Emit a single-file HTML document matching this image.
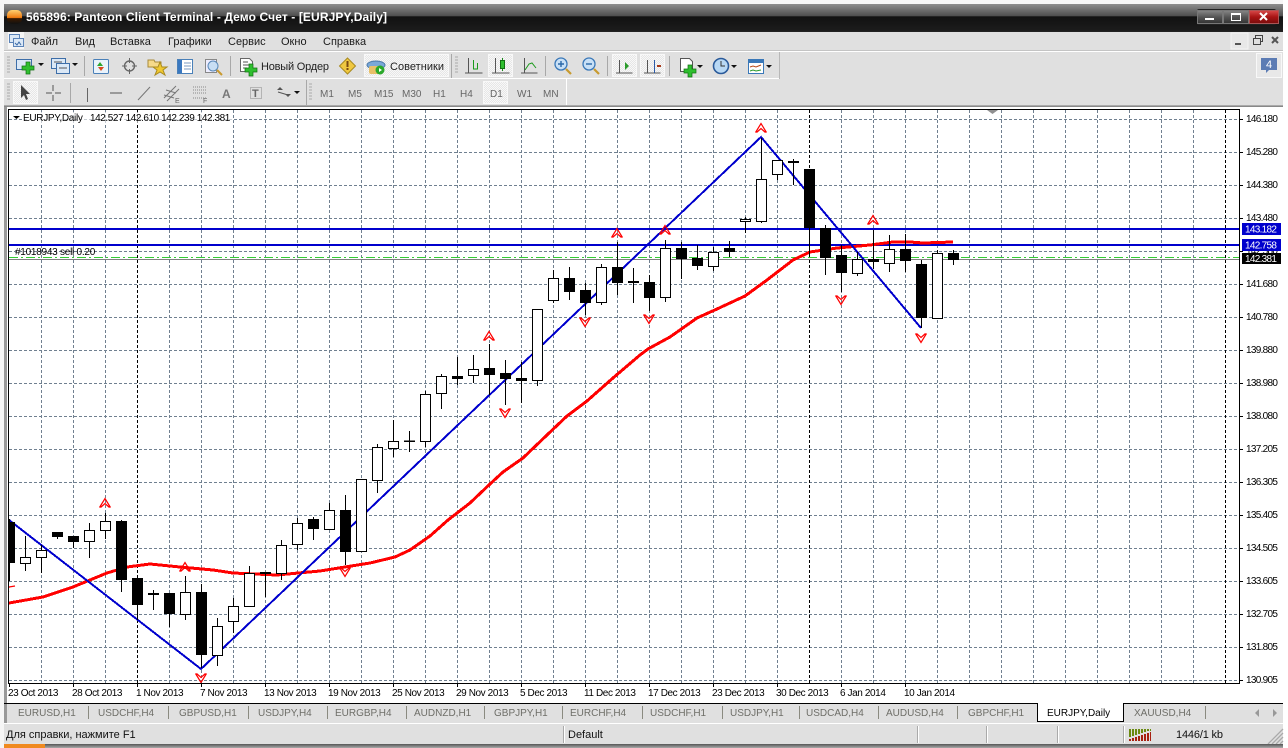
<!DOCTYPE html>
<html lang="ru"><head><meta charset="utf-8"><title>565896: Panteon Client Terminal</title>
<style>
html,body{margin:0;padding:0;background:#fff;width:1288px;height:748px;overflow:hidden}
svg{display:block;position:absolute;left:0;top:0;font-family:"Liberation Sans","Noto Sans CJK SC",sans-serif}
.m{font-size:11px;fill:#1a1a1a}
.t{font-size:11px;fill:#222}
.g{font-size:10px;fill:#666}
.ax{font-size:10px;fill:#000;letter-spacing:-.7px}
.d{font-size:10px;fill:#000;letter-spacing:-.4px}
.tab{font-size:10px;fill:#6e6e68}
.sep{stroke:#a8a8a8;stroke-width:1}
.w{fill:#fff;stroke:#000;stroke-width:1}
.b{fill:#000;stroke:#000;stroke-width:1}
.pr{fill:url(#dots);stroke:#f8f8f8;stroke-width:1}
.pl{fill:#2fbf2f;stroke:#127012;stroke-width:.7}
.ic{fill:none;stroke:#555;stroke-width:1}
</style></head>
<body>
<svg width="1288" height="748" viewBox="0 0 1288 748" xmlns="http://www.w3.org/2000/svg">
<defs>
<pattern id="dots" width="2" height="2" patternUnits="userSpaceOnUse"><rect width="2" height="2" fill="#e6e6e6"/><rect width="1" height="1" fill="#f8f8f8"/><rect x="1" y="1" width="1" height="1" fill="#f8f8f8"/></pattern>
<linearGradient id="tg" x1="0" y1="0" x2="0" y2="1"><stop offset="0" stop-color="#8e8e8e"/><stop offset=".45" stop-color="#4d4d4d"/><stop offset=".46" stop-color="#111"/><stop offset="1" stop-color="#1c1c1c"/></linearGradient>
<linearGradient id="btn" x1="0" y1="0" x2="0" y2="1"><stop offset="0" stop-color="#888"/><stop offset=".5" stop-color="#555"/><stop offset="1" stop-color="#333"/></linearGradient>
<linearGradient id="cl" x1="0" y1="0" x2="0" y2="1"><stop offset="0" stop-color="#d84a4a"/><stop offset=".5" stop-color="#a81414"/><stop offset="1" stop-color="#7a0c0c"/></linearGradient>
<linearGradient id="or" x1="0" y1="0" x2="0" y2="1"><stop offset="0" stop-color="#ffd070"/><stop offset=".55" stop-color="#f07a10"/><stop offset=".6" stop-color="#3a1a00"/><stop offset="1" stop-color="#111"/></linearGradient>
<linearGradient id="bot" x1="0" y1="0" x2="0" y2="1"><stop offset="0" stop-color="#555"/><stop offset="1" stop-color="#aaa"/></linearGradient>
<clipPath id="cc"><rect x="9" y="110" width="1230" height="573"/></clipPath>
</defs>
<rect width="1288" height="748" fill="#f6f6f6"/>
<rect x="1283" width="5" height="748" fill="#fff"/>
<!-- title bar -->
<rect x="4" y="4" width="1279" height="27" fill="url(#tg)"/>
<rect x="7" y="10" width="15" height="14" rx="5" fill="url(#or)"/>
<text x="26" y="21" font-size="12" font-weight="700" fill="#fff" textLength="361" lengthAdjust="spacing">565896: Panteon Client Terminal - Демо Счет - [EURJPY,Daily]</text>
<rect x="1197" y="9" width="79" height="16" rx="2" fill="#222"/>
<rect x="1197.5" y="10.5" width="25" height="13" fill="url(#btn)" stroke="#777"/>
<rect x="1223.5" y="10.5" width="25" height="13" fill="url(#btn)" stroke="#777"/>
<rect x="1249.5" y="10.5" width="29" height="13" fill="url(#cl)" stroke="#a55"/>
<rect x="1205" y="18" width="9" height="2" fill="#fff"/>
<rect x="1231.5" y="13.5" width="9" height="7" fill="none" stroke="#fff"/><rect x="1231" y="13" width="10" height="2" fill="#fff"/>
<path d="M1260 13l7 7M1267 13l-7 7" stroke="#fff" stroke-width="2"/>
<!-- menu + toolbars background -->
<rect x="4" y="31" width="1279" height="75" fill="#e0e0e0"/>
<rect x="4" y="31" width="1279" height="1" fill="#222"/>
<rect x="4" y="50" width="1279" height="1" fill="#c4c4c4"/><rect x="4" y="51" width="1279" height="1" fill="#fff"/>
<rect x="4" y="78" width="776" height="1" fill="#fff"/>
<rect x="779" y="52" width="1" height="27" fill="#b8b8b8"/>
<rect x="566" y="79" width="1" height="26" fill="#fff"/>
<rect x="4" y="105" width="1279" height="1" fill="#aaa"/>
<rect x="4" y="106" width="1279" height="1" fill="#888"/>
<!-- menu -->
<rect x="8" y="32" width="16" height="17" fill="#f6f6f6"/>
<rect x="9.5" y="34.5" width="10" height="8" fill="#dbe8f6" stroke="#5b83b8"/><rect x="13.5" y="38.5" width="10" height="8" fill="#dbe8f6" stroke="#5b83b8"/>
<path d="M15 43l2 2 2-3 2 3" fill="none" stroke="#3a6aa8"/>
<text x="31" y="45" class="m">Файл</text><text x="75" y="45" class="m">Вид</text><text x="110" y="45" class="m">Вставка</text><text x="168" y="45" class="m">Графики</text><text x="228" y="45" class="m">Сервис</text><text x="281" y="45" class="m">Окно</text><text x="323" y="45" class="m">Справка</text>
<rect x="1231" y="33" width="17" height="16" fill="#e8e8e8" stroke="#f4f4f4"/><rect x="1235" y="43" width="6" height="2" fill="#555"/>
<rect x="1253.5" y="38.5" width="7" height="6" fill="none" stroke="#444"/><path d="M1255.5 38v-2.500h7v6h-2" fill="none" stroke="#444"/>
<path d="M1272 37l6 6M1278 37l-6 6" stroke="#555" stroke-width="2"/>
<!-- toolbar 1 -->
<path d="M7 57h3M7 60h3M7 63h3M7 66h3M7 69h3M7 72h3" stroke="#aaa"/>
<path d="M7 84h3M7 87h3M7 90h3M7 93h3M7 96h3M7 99h3" stroke="#aaa"/>
<path d="M84.500 56v20M230.500 56v20M451.500 54v24M545.500 56v20M607.500 56v20M669.500 56v20M70.500 83v20M306.500 80v25" class="sep"/>
<path d="M455 57h3M455 60h3M455 63h3M455 66h3M455 69h3M455 72h3M309 84h3M309 87h3M309 90h3M309 93h3M309 96h3M309 99h3" stroke="#aaa"/>
<!-- new chart -->
<rect x="16.500" y="59.500" width="15" height="10" fill="#dbe8f6" stroke="#3e6ea8"/>
<path d="M26 62h4v4h4v4h-4v4h-4v-4h-4v-4h4z" class="pl"/>
<path d="M38 63h6l-3 3z" fill="#111"/>
<!-- profiles -->
<rect x="51.500" y="58.500" width="14" height="10" fill="#dbe8f6" stroke="#3e6ea8"/><rect x="56.500" y="63.500" width="13" height="10" fill="#dbe8f6" stroke="#3e6ea8"/>
<path d="M54 62h8M59 68h8" stroke="#555"/>
<path d="M72 63h6l-3 3z" fill="#111"/>
<!-- market watch -->
<rect x="93.500" y="59.500" width="15" height="14" rx="1" fill="#eaf3fb" stroke="#4a80b8"/>
<path d="M100 62l-3 4h6z" fill="#2fa52f"/><path d="M101 71l-3-4h6z" fill="#d84a20"/>
<!-- crosshair -->
<circle cx="129.500" cy="66" r="5" fill="none" stroke="#666" stroke-width="1.400"/><path d="M129.500 58v5M129.500 69v5M122 66h5M132 66h5" stroke="#666"/>
<!-- folder star -->
<path d="M148 60h6l1 2h6v5h-13z" fill="#f6da8a" stroke="#a88a3a"/><path d="M160 62l2 5h5l-4 3 2 5-5-3-5 3 2-5-4-3h5z" fill="#f0c830" stroke="#a88a20"/>
<!-- navigator -->
<rect x="177.500" y="59.500" width="15" height="14" fill="#fff" stroke="#4a80b8"/><rect x="178" y="60" width="4" height="13" fill="#3a78c0"/><path d="M184 63h7M184 66h7M184 69h7" stroke="#7a98c0"/>
<!-- terminal zoom -->
<rect x="205.500" y="59.500" width="11" height="13" fill="#eef" stroke="#888"/><circle cx="213" cy="66" r="5" fill="#c8def4" stroke="#5a88b8"/><path d="M217 70l5 5" stroke="#c89a30" stroke-width="2"/>
<!-- new order -->
<path d="M240.500 58.500h9l3 3v10h-12z" fill="#fff" stroke="#666"/><path d="M243 62h5M243 65h6M243 68h4" stroke="#555"/>
<path d="M249 64h4v4h4v4h-4v4h-4v-4h-4v-4h4z" class="pl"/>
<text x="261" y="70" class="t" textLength="68" lengthAdjust="spacing">Новый Ордер</text>
<!-- warn -->
<path d="M347.500 58l8 8-8 8-8-8z" fill="#f0c840" stroke="#a88a20"/><rect x="346.500" y="61" width="2" height="6" fill="#7a4a10"/><rect x="346.500" y="68" width="2" height="2" fill="#7a4a10"/>
<!-- experts -->
<rect x="364.500" y="54.500" width="84" height="22" class="pr"/>
<ellipse cx="376" cy="65" rx="9" ry="4" fill="#7aa8d8" stroke="#4a78a8"/><rect x="369" y="66" width="13" height="8" rx="2" fill="#e8c068"/><circle cx="380" cy="70" r="4.500" fill="#2aa82a"/><path d="M379 68l3 2-3 2z" fill="#fff"/>
<text x="390" y="70" class="t" textLength="54" lengthAdjust="spacing">Советники</text>
<!-- bar chart -->
<path d="M468.500 58v15h14M465 73h3" fill="none" stroke="#555"/><path d="M473.500 60v9h4v-6" fill="none" stroke="#1a9a1a"/>
<rect x="488.500" y="54.500" width="24" height="22" class="pr"/>
<path d="M495.500 58v15h14M492 73h3" fill="none" stroke="#555"/><path d="M502.500 58v13" stroke="#1a8a1a"/><rect x="500.500" y="60.500" width="4" height="8" fill="#2fbf2f" stroke="#127012"/>
<path d="M524.500 58v15h13M521 73h3" fill="none" stroke="#555"/><path d="M525 70l4-6 3-1 4 5" fill="none" stroke="#1a9a1a"/>
<!-- zooms -->
<circle cx="561" cy="64" r="6" fill="#c8e0f6" stroke="#3a78b8" stroke-width="1.300"/><path d="M558 64h6M561 61v6" stroke="#2a68a8" stroke-width="1.400"/><path d="M566 69l5 5" stroke="#c89a30" stroke-width="2.200"/>
<circle cx="589" cy="64" r="6" fill="#c8e0f6" stroke="#3a78b8" stroke-width="1.300"/><path d="M586 64h6" stroke="#2a68a8" stroke-width="1.400"/><path d="M594 69l5 5" stroke="#c89a30" stroke-width="2.200"/>
<rect x="612.500" y="54.500" width="24" height="22" class="pr"/><path d="M619.500 60v13h13M616 73h3" fill="none" stroke="#555"/><path d="M625 62l4 4-4 4z" fill="#2a9a2a"/>
<rect x="640.500" y="54.500" width="24" height="22" class="pr"/><path d="M647.500 60v13h13M644 73h3" fill="none" stroke="#555"/><path d="M654.500 60v13" stroke="#2a5aa8"/><path d="M657 66h4" stroke="#a83a1a" stroke-width="2"/>
<path d="M680.500 58.500h9l3 3v10h-12z" fill="#fff" stroke="#555"/><path d="M688 65h4v4h4v4h-4v4h-4v-4h-4v-4h4z" class="pl"/>
<path d="M697 65h6l-3 3z" fill="#111"/>
<circle cx="721" cy="66" r="7.500" fill="#b8d8f4" stroke="#2a5a9a" stroke-width="1.600"/><path d="M721 61v5h4" fill="none" stroke="#333"/>
<path d="M731 65h6l-3 3z" fill="#111"/>
<rect x="748.500" y="59.500" width="15" height="14" fill="#fff" stroke="#3a78b8"/><rect x="749" y="60" width="14" height="3" fill="#3a78b8"/><path d="M750 67l3-1 3 1 5-2" fill="none" stroke="#b84a1a"/><path d="M750 71l3-1 3 1 5-1" fill="none" stroke="#2a9a2a"/>
<path d="M766 65h6l-3 3z" fill="#111"/>
<!-- notification -->
<rect x="1256.500" y="53.500" width="25" height="24" fill="#e8e8e8" stroke="#f8f8f8"/>
<path d="M1261 58h16v12h-8l-3 3v-3h-5z" fill="#5c7cb4"/>
<text x="1269" y="68" font-size="11" fill="#fff" text-anchor="middle">4</text>
<!-- toolbar 2 -->
<rect x="13.500" y="81.500" width="24" height="22" class="pr"/>
<path d="M21 85v13l3-3 2 5 2-1-2-5h4z" fill="#444"/>
<path d="M53 85v6M53 95v6M46 93h6M55 93h6" stroke="#555"/>
<path d="M87.500 88v14" stroke="#666"/>
<path d="M110 93h12" stroke="#555"/>
<path d="M138 100l12-13" stroke="#777"/>
<path d="M164 98l12-12M167 101l12-12M166 90l10 3M164 95l10 3" stroke="#777"/><text x="175" y="103" font-size="7" fill="#666">E</text>
<path d="M193 87h13M193 90h13M193 93h13M193 98h13" stroke="#888" stroke-dasharray="1 1"/><text x="203" y="103" font-size="7" fill="#666">F</text>
<text x="222" y="98" font-size="12" font-weight="700" fill="#777">A</text>
<rect x="250.500" y="87.500" width="11" height="11" fill="none" stroke="#888" stroke-dasharray="1 1"/><text x="252" y="97" font-size="11" font-weight="700" fill="#666">T</text>
<path d="M280 87l3 3h-6zM288 97l3-3h-6z" fill="#555"/><path d="M278 92l10 3" stroke="#555"/>
<path d="M294 91h6l-3 3z" fill="#111"/>
<text x="320" y="97" class="g">M1</text><text x="348" y="97" class="g">M5</text><text x="374" y="97" class="g">M15</text><text x="402" y="97" class="g">M30</text><text x="433" y="97" class="g">H1</text><text x="460" y="97" class="g">H4</text>
<rect x="483.500" y="81.500" width="24" height="22" class="pr"/>
<text x="490" y="97" class="g">D1</text><text x="517" y="97" class="g">W1</text><text x="543" y="97" class="g">MN</text>
<!-- chart -->
<rect x="4" y="107" width="3" height="596" fill="#999"/>
<rect x="7" y="107" width="1276" height="596" fill="#fff"/>
<g stroke="#708090" stroke-dasharray="3 2" shape-rendering="crispEdges" fill="none">
<path d="M41.500 110V683M73.500 110V683M105.500 110V683M169.500 110V683M201.500 110V683M233.500 110V683M265.500 110V683M297.500 110V683M329.500 110V683M361.500 110V683M393.500 110V683M425.500 110V683M457.500 110V683M489.500 110V683M521.500 110V683M553.500 110V683M585.500 110V683M617.500 110V683M649.500 110V683M681.500 110V683M713.500 110V683M745.500 110V683M777.500 110V683M841.500 110V683M873.500 110V683M905.500 110V683M937.500 110V683M969.500 110V683M1001.500 110V683M1033.500 110V683M1065.500 110V683M1097.500 110V683M1129.500 110V683M1161.500 110V683M1193.500 110V683"/>
<path d="M9 119.500H1239M9 152.500H1239M9 185.500H1239M9 218.500H1239M9 251.500H1239M9 284.500H1239M9 317.500H1239M9 350.500H1239M9 383.500H1239M9 416.500H1239M9 449.500H1239M9 482.500H1239M9 515.500H1239M9 548.500H1239M9 581.500H1239M9 614.500H1239M9 647.500H1239M9 680.500H1239"/>
</g>
<path d="M137.500 110V683M809.500 110V683M1225.500 110V683" stroke="#000" stroke-dasharray="3 2" shape-rendering="crispEdges"/>
<g clip-path="url(#cc)">
<path d="M9 259.500H1239" stroke="#808080" shape-rendering="crispEdges"/>
<path d="M9 257.500H1239" stroke="#32cd32" stroke-dasharray="9 3 2 3" shape-rendering="crispEdges"/>
<path d="M9 229H1239M9 245H1239" stroke="#0000cd" stroke-width="2" shape-rendering="crispEdges"/>
<polyline fill="none" stroke="#ff0000" stroke-width="3" shape-rendering="crispEdges" points="9,603 43,597 73,587 107,573 127,567 150,564 180,567 213,570 233,573 277,575 320,571 345,567 370,563 395,557 410,550 430,536 448,520 470,503 490,484 503,472 523,458 547,435 567,416 587,401 613,378 640,355 648,349 670,337 697,318 717,309 745,296 767,280 793,260 810,252 837,248 870,245 893,242 910,242 923,243 953,242"/>
<polyline fill="none" stroke="#0000cd" stroke-width="2" shape-rendering="crispEdges" points="9,520 201,669 761,137 921,328"/>
<!-- wicks -->
<path stroke="#000" fill="none" shape-rendering="crispEdges" d="M9.500 519V581M25.500 536V571M41.500 545V573M57.500 532V539M73.500 536V548M89.500 523V558M105.500 513V539M121.500 520V592M137.500 578V620M153.500 590V610M169.500 593V627M185.500 576V620M201.500 584V668M217.500 618V666M233.500 598V633M249.500 566V607M265.500 572V597M281.500 540V580M297.500 518V550M313.500 517V540M329.500 503V529M345.500 495V565M361.500 479V552M377.500 444V493M393.500 420V457M409.500 431V452M425.500 391V447M441.500 374V409M457.500 357V385M473.500 355V383M489.500 344V395M505.500 360V405M521.500 362V403M537.500 309V386M553.500 270V303M569.500 267V300M585.500 283V315M601.500 264V305M617.500 242V295M633.500 268V303M649.500 275V311M665.500 240V302M681.500 242V279M697.500 245V270M713.500 247V271M729.500 241V257M745.500 217V233M761.500 138V223M777.500 160V180M793.500 159V185M809.500 169V257M825.500 225V275M841.500 245V292M857.500 252V276M873.500 230V269M889.500 235V272M905.500 234V272M921.500 260V328M937.500 250V318M953.500 250V265"/>
<!-- bodies -->
<g shape-rendering="crispEdges">
<rect class="b" x="4.500" y="522.500" width="10" height="40"/>
<rect class="w" x="20.500" y="557.500" width="10" height="6"/>
<rect class="w" x="36.500" y="550.500" width="10" height="7"/>
<rect class="b" x="52.500" y="532.500" width="10" height="4"/>
<rect class="b" x="68.500" y="536.500" width="10" height="5"/>
<rect class="w" x="84.500" y="530.500" width="10" height="11"/>
<rect class="w" x="100.500" y="521.500" width="10" height="9"/>
<rect class="b" x="116.500" y="521.500" width="10" height="58"/>
<rect class="b" x="132.500" y="578.500" width="10" height="26"/>
<rect class="b" x="148.500" y="593.500" width="10" height="1"/>
<rect class="b" x="164.500" y="593.500" width="10" height="20"/>
<rect class="w" x="180.500" y="592.500" width="10" height="22"/>
<rect class="b" x="196.500" y="592.500" width="10" height="62"/>
<rect class="w" x="212.500" y="626.500" width="10" height="29"/>
<rect class="w" x="228.500" y="606.500" width="10" height="15"/>
<rect class="w" x="244.500" y="573.500" width="10" height="33"/>
<rect class="b" x="260.500" y="572.500" width="10" height="1"/>
<rect class="w" x="276.500" y="545.500" width="10" height="28"/>
<rect class="w" x="292.500" y="523.500" width="10" height="21"/>
<rect class="b" x="308.500" y="519.500" width="10" height="9"/>
<rect class="w" x="324.500" y="510.500" width="10" height="19"/>
<rect class="b" x="340.500" y="510.500" width="10" height="41"/>
<rect class="w" x="356.500" y="479.500" width="10" height="72"/>
<rect class="w" x="372.500" y="447.500" width="10" height="33"/>
<rect class="w" x="388.500" y="441.500" width="10" height="7"/>
<rect class="b" x="404.500" y="441" width="10" height="0.500"/>
<rect class="w" x="420.500" y="394.500" width="10" height="47"/>
<rect class="w" x="436.500" y="376.500" width="10" height="17"/>
<rect class="b" x="452.500" y="376.500" width="10" height="2"/>
<rect class="w" x="468.500" y="369.500" width="10" height="6"/>
<rect class="b" x="484.500" y="368.500" width="10" height="6"/>
<rect class="b" x="500.500" y="373.500" width="10" height="5"/>
<rect class="b" x="516.500" y="378.500" width="10" height="2"/>
<rect class="w" x="532.500" y="309.500" width="10" height="71"/>
<rect class="w" x="548.500" y="278.500" width="10" height="22"/>
<rect class="b" x="564.500" y="278.500" width="10" height="13"/>
<rect class="b" x="580.500" y="290.500" width="10" height="12"/>
<rect class="w" x="596.500" y="267.500" width="10" height="35"/>
<rect class="b" x="612.500" y="267.500" width="10" height="15"/>
<rect class="b" x="628.500" y="281.500" width="10" height="1"/>
<rect class="b" x="644.500" y="282.500" width="10" height="15"/>
<rect class="w" x="660.500" y="248.500" width="10" height="49"/>
<rect class="b" x="676.500" y="248.500" width="10" height="10"/>
<rect class="b" x="692.500" y="258.500" width="10" height="7"/>
<rect class="w" x="708.500" y="252.500" width="10" height="14"/>
<rect class="b" x="724.500" y="248.500" width="10" height="3"/>
<rect class="w" x="740.500" y="219.500" width="10" height="2"/>
<rect class="w" x="756.500" y="179.500" width="10" height="42"/>
<rect class="w" x="772.500" y="160.500" width="10" height="14"/>
<rect class="b" x="788.500" y="161.500" width="10" height="1"/>
<rect class="b" x="804.500" y="169.500" width="10" height="58"/>
<rect class="b" x="820.500" y="228.500" width="10" height="29"/>
<rect class="b" x="836.500" y="255.500" width="10" height="17"/>
<rect class="w" x="852.500" y="259.500" width="10" height="14"/>
<rect class="b" x="868.500" y="259.500" width="10" height="2"/>
<rect class="w" x="884.500" y="249.500" width="10" height="14"/>
<rect class="b" x="900.500" y="249.500" width="10" height="11"/>
<rect class="b" x="916.500" y="264.500" width="10" height="53"/>
<rect class="w" x="932.500" y="253.500" width="10" height="65"/>
<rect class="b" x="948.500" y="253.500" width="10" height="6"/>
</g>
<!-- fractals up -->
<g fill="none" stroke="#ff0000" stroke-width="1.200">
<path d="M99.500 507.500L105 498.500L110.500 507.500M100.500 507.500L105 503.500L109.500 507.500"/>
<path d="M179.500 571.500L185 562.500L190.500 571.500M180.500 571.500L185 567.500L189.500 571.500"/>
<path d="M483.500 340.500L489 331.500L494.500 340.500M484.500 340.500L489 336.500L493.500 340.500"/>
<path d="M611.500 237.500L617 228.500L622.500 237.500M612.500 237.500L617 233.500L621.500 237.500"/>
<path d="M659.500 234.500L665 225.500L670.500 234.500M660.500 234.500L665 230.500L669.500 234.500"/>
<path d="M755.500 132.500L761 123.500L766.500 132.500M756.500 132.500L761 128.500L765.500 132.500"/>
<path d="M867.500 224.500L873 215.500L878.500 224.500M868.500 224.500L873 220.500L877.500 224.500"/>
<!-- fractals down -->
<path d="M195.500 673.500L201 682.500L206.500 673.500M196.500 673.500L201 677.500L205.500 673.500"/>
<path d="M339.500 567.500L345 576.500L350.500 567.500M340.500 567.500L345 571.500L349.500 567.500"/>
<path d="M499.500 408.500L505 417.500L510.500 408.500M500.500 408.500L505 412.500L509.500 408.500"/>
<path d="M579.500 317.500L585 326.500L590.500 317.500M580.500 317.500L585 321.500L589.500 317.500"/>
<path d="M643.500 314.500L649 323.500L654.500 314.500M644.500 314.500L649 318.500L653.500 314.500"/>
<path d="M835.500 295.500L841 304.500L846.500 295.500M836.500 295.500L841 299.500L845.500 295.500"/>
<path d="M915.500 333.500L921 342.500L926.500 333.500M916.500 333.500L921 337.500L925.500 333.500"/>
<path d="M4 595L9 587L15 586M5 594L9 591"/>
</g>
</g>
<rect x="8.500" y="109.500" width="1231" height="574" fill="none" stroke="#000" shape-rendering="crispEdges"/>
<path d="M987 110h11l-5.500 4z" fill="#909090"/>
<path d="M13 116h7l-3.500 3z" fill="#000"/>
<rect x="22" y="112" width="210" height="12" fill="#fff" opacity=".6"/>
<text x="23" y="121" class="d" style="letter-spacing:-.3px">EURJPY,Daily</text>
<text x="90" y="121" class="d" style="letter-spacing:-.42px">142.527 142.610 142.239 142.381</text>
<text x="15" y="255" class="d" style="letter-spacing:-.25px">#1018943 sell 0.20</text>
<!-- axis ticks -->
<path d="M1240 119.500h3M1240 152.500h3M1240 185.500h3M1240 218.500h3M1240 251.500h3M1240 284.500h3M1240 317.500h3M1240 350.500h3M1240 383.500h3M1240 416.500h3M1240 449.500h3M1240 482.500h3M1240 515.500h3M1240 548.500h3M1240 581.500h3M1240 614.500h3M1240 647.500h3M1240 680.500h3" stroke="#000" shape-rendering="crispEdges"/>
<path d="M9.500 684v3M73.500 684v3M137.500 684v3M201.500 684v3M265.500 684v3M329.500 684v3M393.500 684v3M457.500 684v3M521.500 684v3M585.500 684v3M649.500 684v3M713.500 684v3M777.500 684v3M841.500 684v3M905.500 684v3" stroke="#000" shape-rendering="crispEdges"/>
<g class="ax">
<text x="1246" y="122">146.180</text><text x="1246" y="155">145.280</text><text x="1246" y="188">144.380</text><text x="1246" y="221">143.480</text><text x="1246" y="254">142.580</text><text x="1246" y="287">141.680</text><text x="1246" y="320">140.780</text><text x="1246" y="353">139.880</text><text x="1246" y="386">138.980</text><text x="1246" y="419">138.080</text><text x="1246" y="452">137.205</text><text x="1246" y="485">136.305</text><text x="1246" y="518">135.405</text><text x="1246" y="551">134.505</text><text x="1246" y="584">133.605</text><text x="1246" y="617">132.705</text><text x="1246" y="650">131.805</text><text x="1246" y="683">130.905</text>
</g>
<rect x="1242" y="223" width="39" height="12" fill="#0000cd"/><text x="1245" y="232.500" class="ax" style="fill:#fff">143.182</text>
<rect x="1242" y="239" width="39" height="12" fill="#0000cd"/><text x="1245" y="248.500" class="ax" style="fill:#fff">142.758</text>
<rect x="1242" y="253" width="39" height="11" fill="#000"/><text x="1245" y="262" class="ax" style="fill:#fff">142.381</text>
<g class="d">
<text x="8" y="696">23 Oct 2013</text><text x="72" y="696">28 Oct 2013</text><text x="136" y="696">1 Nov 2013</text><text x="200" y="696">7 Nov 2013</text><text x="264" y="696">13 Nov 2013</text><text x="328" y="696">19 Nov 2013</text><text x="392" y="696">25 Nov 2013</text><text x="456" y="696">29 Nov 2013</text><text x="520" y="696">5 Dec 2013</text><text x="584" y="696">11 Dec 2013</text><text x="648" y="696">17 Dec 2013</text><text x="712" y="696">23 Dec 2013</text><text x="776" y="696">30 Dec 2013</text><text x="840" y="696">6 Jan 2014</text><text x="904" y="696">10 Jan 2014</text>
</g>
<!-- tabs -->
<rect x="4" y="703" width="1279" height="20" fill="#e0e0e0"/>
<rect x="4" y="703" width="1279" height="1" fill="#000"/>
<rect x="4" y="704" width="3" height="19" fill="#999"/>
<path d="M88.500 706v13M168.500 706v13M248.500 706v13M327.500 706v13M406.500 706v13M484.500 706v13M562.500 706v13M642.500 706v13M722.500 706v13M799.500 706v13M878.500 706v13M957.500 706v13M1205.500 706v13" stroke="#8a8a80"/>
<text x="18" y="716" class="tab">EURUSD,H1</text><text x="98" y="716" class="tab">USDCHF,H4</text><text x="179" y="716" class="tab">GBPUSD,H1</text><text x="258" y="716" class="tab">USDJPY,H4</text><text x="335" y="716" class="tab">EURGBP,H4</text><text x="414" y="716" class="tab">AUDNZD,H1</text><text x="494" y="716" class="tab">GBPJPY,H1</text><text x="570" y="716" class="tab">EURCHF,H4</text><text x="650" y="716" class="tab">USDCHF,H1</text><text x="730" y="716" class="tab">USDJPY,H1</text><text x="806" y="716" class="tab">USDCAD,H4</text><text x="886" y="716" class="tab">AUDUSD,H4</text><text x="968" y="716" class="tab">GBPCHF,H1</text>
<rect x="1037.500" y="703.500" width="86" height="18" fill="#fff" stroke="#000"/><rect x="1038" y="703" width="85" height="1" fill="#fff"/>
<text x="1047" y="716" class="tab" style="fill:#000">EURJPY,Daily</text>
<text x="1134" y="716" class="tab">XAUUSD,H4</text>
<path d="M1259 709v8l-4-4z" fill="#999"/><path d="M1273 709v8l4-4z" fill="#999"/>
<!-- status -->
<rect x="4" y="723" width="1279" height="21" fill="#e0e0e0"/>
<rect x="4" y="723" width="1279" height="1" fill="#fff"/>
<text x="6" y="738" class="t" style="fill:#111">Для справки, нажмите F1</text>
<text x="568" y="738" class="t" style="fill:#111">Default</text>
<text x="1176" y="738" class="t" style="fill:#111" textLength="47" lengthAdjust="spacing">1446/1 kb</text>
<path d="M563.500 726v17M917.500 726v17M986.500 726v17M1057.500 726v17M1123.500 726v17" stroke="#aaa"/>
<path d="M564.500 726v17M918.500 726v17M987.500 726v17M1058.500 726v17M1124.500 726v17" stroke="#fff"/>
<path d="M1129 729h2v8h-2zM1132 729h2v7h-2zM1135 729h2v6h-2zM1138 729h2v5h-2zM1141 729h2v4h-2zM1144 729h2v3h-2zM1147 729h2v2h-2zM1150 729h1v2h-1z" fill="#6a8a10"/>
<path d="M1129 739h2v2h-2zM1132 738h2v3h-2zM1135 737h2v4h-2zM1138 736h2v5h-2zM1141 735h2v6h-2zM1144 734h2v7h-2zM1147 733h2v8h-2zM1150 732h1v9h-1z" fill="#a82010"/>
<path d="M1268 744l15-15M1272 744l11-11M1276 744l7-7M1280 744l3-3" stroke="#aaa" stroke-width="1.300"/>
<rect x="4" y="744" width="1279" height="4" fill="url(#bot)"/>
<rect x="4" y="744" width="41" height="4" fill="#f08a20"/>
</svg>
</body></html>
